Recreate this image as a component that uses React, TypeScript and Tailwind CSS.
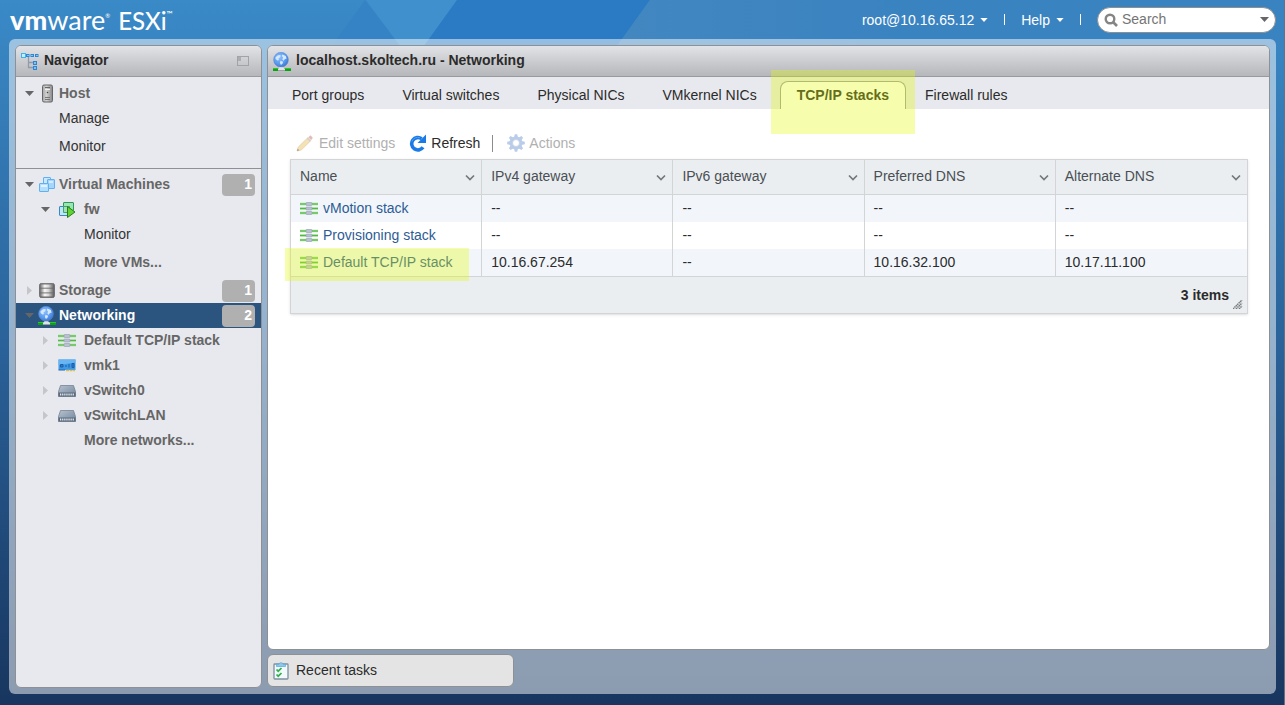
import type { ReactNode } from "react";

function GlobeIcon() {
  return (
    <svg width="18" height="19" viewBox="0 0 18 19" aria-hidden="true">
      <defs>
        <radialGradient id="globe" cx="0.4" cy="0.35" r="0.7">
          <stop offset="0" stopColor="#8fc0fa" />
          <stop offset="0.6" stopColor="#5a9bf0" />
          <stop offset="1" stopColor="#3a72cc" />
        </radialGradient>
      </defs>
      <circle cx="8" cy="7.700" r="7.400" fill="url(#globe)" stroke="#5a8ad0" strokeWidth="0.500" />
      <path
        d="M2.500 5.200 5 3.200l2.600-.3L7.400 5 5.400 6.400 6 8 4.600 8.600 2.600 7zM9.400 2.600l3.400 1.500.8 2.600-1.800.4-1 1.600-1.400-1 .5-2.400-1.200-1.200zM7.500 8.800l2.600 1-.5 1.800-1.600 1.400L6.900 11z"
        fill="#d6e8ff"
      />
      <rect y="16" width="18" height="3" fill="#0fa016" />
      <rect y="16" width="18" height="1" fill="#2cc431" />
      <path d="M5 17 6.500 15.200h3.500L12 17v2H5z" fill="#dfe2e5" />
      <path d="M5 18h7v1H5z" fill="#9a9fa4" />
    </svg>
  );
}

function TreeIcon() {
  return (
    <svg width="18" height="17" viewBox="0 0 18 17" aria-hidden="true">
      <path d="M7.500 4v10.500H13M7.500 9.500H13" fill="none" stroke="#8f9bab" strokeWidth="1.300" />
      <rect x="0.500" y="0.500" width="4" height="4" fill="#c5ecff" stroke="#3fb3ec" />
      <g fill="#7fc0f2" stroke="#2b86d6">
        <rect x="5.500" y="1.500" width="2.500" height="2" />
        <rect x="10" y="1.500" width="2.500" height="2" />
        <rect x="14.500" y="1.500" width="2.500" height="2" />
        <rect x="12.500" y="8.500" width="3" height="3" />
        <rect x="12.500" y="13.500" width="3" height="3" />
      </g>
    </svg>
  );
}

function HostIcon() {
  return (
    <svg width="18" height="19" viewBox="0 0 18 19" aria-hidden="true">
      <defs>
        <linearGradient id="host" x1="0" x2="1">
          <stop offset="0" stopColor="#a5a5a5" />
          <stop offset="0.4" stopColor="#d2d2d2" />
          <stop offset="1" stopColor="#888" />
        </linearGradient>
      </defs>
      <rect x="4.500" y="1" width="10" height="17" rx="1.500" fill="url(#host)" stroke="#666" />
      <path d="M7 3.500h5" stroke="#666" />
      <path d="M7 5.500h5" stroke="#f0f0f0" />
      <path d="M7 13.500h5M7 15.500h5" stroke="#777" />
      <circle cx="9.500" cy="8.500" r="0.800" fill="#444" />
    </svg>
  );
}

function VmsIcon() {
  return (
    <svg width="18" height="17" viewBox="0 0 18 17" aria-hidden="true">
      <g stroke="#62b0ee">
        <rect x="5.500" y="1.500" width="7" height="8" rx="0.500" fill="#c9e7fe" />
        <rect x="9.500" y="3.500" width="7" height="9" rx="0.500" fill="#a6d5fc" />
        <rect x="1.500" y="7.500" width="9" height="8" rx="0.500" fill="#b4defd" />
      </g>
      <path d="M3 9h6v2H3z" fill="#e0f3ff" />
      <path d="M11 5h4v2h-4z" fill="#d3ecff" />
    </svg>
  );
}

function VmOnIcon() {
  return (
    <svg width="18" height="17" viewBox="0 0 18 17" aria-hidden="true">
      <rect x="5.500" y="1.500" width="10" height="8" rx="0.500" fill="#9be6b0" stroke="#2f9460" />
      <rect x="1.500" y="5.500" width="9" height="9" rx="0.500" fill="#bfe6f4" stroke="#3a87c8" />
      <path d="M5.500 5.500h6v6h-6z" fill="#9fe3b4" stroke="#3fa373" />
      <path d="M9.500 5.500v11l7.500-5.500z" fill="#62d332" stroke="#277d1a" strokeLinejoin="round" />
    </svg>
  );
}

function StorageIcon() {
  return (
    <svg width="18" height="17" viewBox="0 0 18 17" aria-hidden="true">
      <defs>
        <linearGradient id="disk" x1="0" x2="1">
          <stop offset="0" stopColor="#5f5f5f" />
          <stop offset="0.35" stopColor="#f8f8f8" />
          <stop offset="0.6" stopColor="#d5d5d5" />
          <stop offset="1" stopColor="#555" />
        </linearGradient>
      </defs>
      <rect x="1.500" y="1.500" width="15" height="14" rx="1.800" fill="url(#disk)" stroke="#6a6a6a" strokeWidth="0.800" />
      <path d="M2 2h14" stroke="#777" />
      <path d="M1.500 6.200h15M1.500 10.900h15" stroke="#6a6a6a" strokeWidth="0.900" />
      <path d="M2 15h14" stroke="#666" />
    </svg>
  );
}

function StackIcon() {
  return (
    <svg width="18" height="13" viewBox="0 0 18 13" aria-hidden="true">
      <path d="M0 2h18M0 6.500h18M0 11h18" stroke="#9fd996" strokeWidth="2.400" />
      <path d="M0 2h18M0 6.500h18M0 11h18" stroke="#4fbb40" strokeWidth="1.200" />
      <g fill="#b7c1cf" stroke="#93a0b1" strokeWidth="0.600">
        <rect x="6" y="0.500" width="6" height="3" rx="0.800" />
        <rect x="6" y="5" width="6" height="3" rx="0.800" />
        <rect x="6" y="9.500" width="6" height="3" rx="0.800" />
      </g>
    </svg>
  );
}

function NicIcon() {
  return (
    <svg width="18" height="13" viewBox="0 0 18 13" aria-hidden="true">
      <rect x="0.500" y="0.500" width="17" height="10.500" fill="#3f98e6" />
      <path d="M.5.5h17v3L.5 6z" fill="#69b5f2" />
      <path d="M2.500 5.500h2.500v2.500H2.500zM7 7h2M11 5v3.500M14 4.500h2v4h-2z" stroke="#1a5fa8" fill="#2e7cc8" />
      <path d="M8 11.500h9" stroke="#d8bf55" strokeWidth="1.500" strokeDasharray="3 .6" />
      <path d="M.5 11h6.500" stroke="#2467ab" />
    </svg>
  );
}

function SwitchIcon() {
  return (
    <svg width="18" height="12" viewBox="0 0 18 12" aria-hidden="true">
      <defs>
        <linearGradient id="sw" x1="0" y1="0" x2="1" y2="1">
          <stop offset="0" stopColor="#b5c2cf" />
          <stop offset="1" stopColor="#74859a" />
        </linearGradient>
      </defs>
      <path d="M2.500 0.500h13l2 6v5H.5v-5z" fill="url(#sw)" stroke="#6a7a8d" strokeWidth="0.700" />
      <path d="M.5 7.500h17v4H.5z" fill="#5b6a7c" />
      <path d="M2 9.500h14" stroke="#dfe7ee" strokeWidth="2" strokeDasharray="1.300 .8" />
    </svg>
  );
}

function PencilIcon() {
  return (
    <svg width="18" height="17" viewBox="0 0 18 17" aria-hidden="true">
      <path d="M1 16 2.300 12 12 2.500l3 3L5.200 15z" fill="#f5e2b4" stroke="#e0cba0" strokeWidth="0.700" />
      <path d="m12.300 2.200 1.400-1.300c.5-.4 1-.4 1.400 0l1.300 1.400c.4.400.4.900 0 1.300L15.200 5z" fill="#e2bcbc" />
      <path d="m11.300 3.200 3 3" stroke="#ccd0d6" strokeWidth="1.300" />
      <path d="M1 16l.7-2.200 1.600 1.500z" fill="#9d968c" />
    </svg>
  );
}

function RefreshIcon() {
  return (
    <svg width="18" height="18" viewBox="0 0 18 18" aria-hidden="true">
      <path d="M14 13.300A6.200 6.200 0 1 1 12.600 4.800" fill="none" stroke="#1b7ae6" strokeWidth="3.600" />
      <path d="M17 0.500v8.500H8.500z" fill="#1b7ae6" />
      <path d="M3 7.500a6 6 0 0 1 8-3.700" fill="none" stroke="#4aa0f5" strokeWidth="1" />
    </svg>
  );
}

const teeth = [0, 45, 90, 135, 180, 225, 270, 315];

function GearIcon() {
  return (
    <svg width="18" height="18" viewBox="0 0 18 18" aria-hidden="true">
      <g fill="#b9cce9">
        {teeth.map((angle) => (
          <path key={angle} d="M7.800 0.200h2.400l.9 3.800H6.900z" transform={`rotate(${angle} 9 9)`} />
        ))}
      </g>
      <circle cx="9" cy="9" r="5" fill="none" stroke="#b9cce9" strokeWidth="3" />
      <circle cx="9" cy="9" r="3.500" fill="#fff" stroke="#a9bbd6" strokeWidth="0.600" />
    </svg>
  );
}

function TasksIcon() {
  return (
    <svg width="16" height="19" viewBox="0 0 16 19" aria-hidden="true">
      <rect x="1" y="3" width="14" height="15" rx="0.800" fill="#f2f9fd" stroke="#7d8fa0" strokeWidth="1.300" />
      <path d="M3.500 5.500V3.300h2.300a2.300 2.300 0 0 1 4.400 0h2.300v2.200z" fill="#8cc8ec" stroke="#5ea5d2" strokeWidth="0.700" />
      <path d="m3.500 8.500 1.700 1.700L8.500 7M3.500 13.500l1.700 1.700L8.500 12" fill="none" stroke="#2fb04a" strokeWidth="1.700" />
    </svg>
  );
}

function Caret({ className }: { className: string }) {
  return (
    <svg width="9" height="5" viewBox="0 0 9 5" className={className} aria-hidden="true">
      <path d="M0 0h9L4.500 5z" fill="currentColor" />
    </svg>
  );
}

function Chevron() {
  return (
    <svg width="10" height="7" viewBox="0 0 10 7" aria-hidden="true">
      <path d="m1 1.500 4 4 4-4" fill="none" stroke="#74787c" strokeWidth="1.700" />
    </svg>
  );
}

function Backdrop() {
  return (
    <svg className="absolute left-0 top-0 h-[46px] w-full" aria-hidden="true">
      <defs>
        <linearGradient id="fade" gradientUnits="userSpaceOnUse" x1="620" y1="0" x2="900" y2="0">
          <stop offset="0" stopColor="#4287c0" />
          <stop offset="1" stopColor="#3a83c1" />
        </linearGradient>
      </defs>
      <path d="M365 0 400 46H332z" fill="#3583c4" />
      <path d="M366 0h91l-33 46h-24z" fill="#4090ce" />
      <path d="M457 0h193l-33 46H424z" fill="#2a7bc4" />
      <path d="M650 0h3000v46H617z" fill="url(#fade)" />
    </svg>
  );
}

type TreeItem = {
  label: string;
  icon?: ReactNode;
  level: 1 | 2;
  arrow?: "open" | "closed";
  badge?: number;
  plain?: boolean;
  active?: boolean;
  spaced?: boolean;
};

const hostItems: TreeItem[] = [
  { label: "Host", icon: <HostIcon />, level: 1, arrow: "open" },
  { label: "Manage", level: 1, plain: true },
  { label: "Monitor", level: 1, plain: true, spaced: true },
];

const inventoryItems: TreeItem[] = [
  { label: "Virtual Machines", icon: <VmsIcon />, level: 1, arrow: "open", badge: 1 },
  { label: "fw", icon: <VmOnIcon />, level: 2, arrow: "open" },
  { label: "Monitor", level: 2, plain: true },
  { label: "More VMs...", level: 2, spaced: true },
  { label: "Storage", icon: <StorageIcon />, level: 1, arrow: "closed", badge: 1, spaced: true },
  { label: "Networking", icon: <GlobeIcon />, level: 1, arrow: "open", badge: 2, active: true },
  { label: "Default TCP/IP stack", icon: <StackIcon />, level: 2, arrow: "closed" },
  { label: "vmk1", icon: <NicIcon />, level: 2, arrow: "closed" },
  { label: "vSwitch0", icon: <SwitchIcon />, level: 2, arrow: "closed" },
  { label: "vSwitchLAN", icon: <SwitchIcon />, level: 2, arrow: "closed" },
  { label: "More networks...", level: 2 },
];

function TreeRow({ item }: { item: TreeItem }) {
  const top = item.level === 1;
  const tone = item.active
    ? "bg-[#2b547e] font-bold text-white"
    : item.plain
      ? "text-[#333]"
      : "font-bold text-[#666]";
  return (
    <li className={item.spaced ? "pt-[3px]" : ""}>
      <a href="#" className={`flex h-[25px] items-center pr-1.5 ${top ? "pl-2" : "pl-6"} ${tone}`}>
        <span className="flex w-[10px] justify-center">
          {item.arrow === "open" && <Caret className="text-[#666]" />}
          {item.arrow === "closed" && <Caret className="-rotate-90 text-[#c6c6ca]" />}
        </span>
        <span className={`flex w-[18px] justify-center ${top ? "ml-1" : "ml-2"}`}>{item.icon}</span>
        <span className={`pb-0.5 ${top ? "ml-[3px]" : "ml-2"}`}>{item.label}</span>
        {item.badge !== undefined && (
          <span className="ml-auto flex h-[22px] w-[33px] items-center justify-end rounded bg-[#b0b0b0] pb-0.5 pr-[3px] text-white">
            {item.badge}
          </span>
        )}
      </a>
    </li>
  );
}

function Panel({ className, children }: { className: string; children: ReactNode }) {
  return <div className={`rounded-md border border-[#8f9093] ${className}`}>{children}</div>;
}

const barClass =
  "flex h-[31px] shrink-0 items-center rounded-t-[5px] border-b border-[#999a9d] bg-linear-to-b from-[#e2e3e6] to-[#b6b7ba] font-bold text-[#2b2b2b]";

const tabs = ["Port groups", "Virtual switches", "Physical NICs", "VMkernel NICs", "TCP/IP stacks", "Firewall rules"];

const columns = ["Name", "IPv4 gateway", "IPv6 gateway", "Preferred DNS", "Alternate DNS"];

const stacks = [
  { name: "vMotion stack", values: ["--", "--", "--", "--"], marked: false },
  { name: "Provisioning stack", values: ["--", "--", "--", "--"], marked: false },
  { name: "Default TCP/IP stack", values: ["10.16.67.254", "--", "10.16.32.100", "10.17.11.100"], marked: true },
];

export default function App() {
  return (
    <div className="relative flex min-h-screen flex-col bg-linear-to-b from-[#3a8ac8] via-[#2a6198] to-[#18365f] font-['Liberation_Sans',Arial,sans-serif] text-[14px] leading-[18px] text-[#2b2b2b]">
      <Backdrop />
      <span className="absolute inset-y-0 right-0 w-px bg-[#5f7488]" />

      <header className="relative flex h-[39px] shrink-0 items-center pl-[10px] pr-[9px] text-white">
        <div className="flex items-center font-[Lato,sans-serif]">
          <span className="flex items-center text-[27px] leading-8">
            <span className="font-black">vm</span>
            <span>ware</span>
            <span className="self-start pt-2 text-[6px] leading-[8px]">®</span>
          </span>
          <span className="ml-2 flex items-center pt-0.5 text-[24px] leading-8 font-medium">
            ESXi
            <span className="self-start pt-[5px] text-[8px] leading-[8px]">™</span>
          </span>
        </div>
        <div className="ml-auto flex items-center">
          <button type="button" className="flex items-center gap-[6px]">
            root@10.16.65.12
            <Caret className="h-1 w-2" />
          </button>
          <span className="ml-4 h-[11px] w-px bg-white" />
          <button type="button" className="ml-4 flex items-center gap-[6px]">
            Help
            <Caret className="h-1 w-2" />
          </button>
          <span className="ml-4 h-[11px] w-px bg-white" />
          <div className="ml-4 flex h-[26px] w-[179px] items-center rounded-full border border-[#8f8f8f] bg-white px-[6px]">
            <svg width="14" height="14" viewBox="0 0 14 14" className="shrink-0" aria-hidden="true">
              <circle cx="6" cy="6" r="4.300" fill="none" stroke="#858585" strokeWidth="2.400" />
              <path d="m9 9 4 4" stroke="#858585" strokeWidth="2.600" />
            </svg>
            <input
              type="search"
              aria-label="Search"
              placeholder="Search"
              className="ml-1 w-full min-w-0 bg-transparent pb-0.5 text-[#333] outline-none placeholder:text-[#757575]"
            />
            <button type="button" aria-label="Search options" className="shrink-0">
              <Caret className="text-[#666]" />
            </button>
          </div>
        </div>
      </header>

      <div className="relative mx-[9px] mb-[11px] flex flex-1 gap-[5px] rounded-md bg-white/50 p-[6px]">
        <Panel className="flex w-[247px] shrink-0 flex-col bg-[#e8e9ee]">
          <div className={`${barClass} pl-[5px] pr-3`}>
            <TreeIcon />
            <h2 className="ml-[5px] pb-0.5">Navigator</h2>
            <button type="button" aria-label="Minimize navigator" className="ml-auto">
              <svg width="12" height="10" viewBox="0 0 12 10" className="block" aria-hidden="true">
                <rect x="0.500" y="0.500" width="11" height="9" fill="none" stroke="#a3a3a6" />
                <path d="M1 1h3v4H1z" fill="#adadb0" />
              </svg>
            </button>
          </div>
          <nav aria-label="Inventory">
            <ul className="border-b border-[#8f9093] pb-[9px] pt-1">
              {hostItems.map((item) => (
                <TreeRow key={item.label} item={item} />
              ))}
            </ul>
            <ul className="pt-[3px]">
              {inventoryItems.map((item) => (
                <TreeRow key={item.label} item={item} />
              ))}
            </ul>
          </nav>
        </Panel>

        <div className="flex min-w-0 flex-1 flex-col gap-1 pb-px">
          <Panel className="flex flex-1 flex-col bg-white">
            <div className={`${barClass} gap-[5px] pl-[5px]`}>
              <GlobeIcon />
              <h1 className="pb-0.5">localhost.skoltech.ru - Networking</h1>
            </div>

            <div role="tablist" className="flex h-8 shrink-0 items-end bg-[#e8e9ee] pl-[5px]">
              {tabs.map((tab) =>
                tab === "TCP/IP stacks" ? (
                  <div key={tab} className="relative ml-1">
                    <button
                      type="button"
                      role="tab"
                      aria-selected="true"
                      className="flex h-7 items-center rounded-t-lg border border-b-0 border-[#9b9ca0] bg-white px-4 pb-px font-bold"
                    >
                      {tab}
                    </button>
                    <span className="pointer-events-none absolute -inset-x-[9px] -bottom-[25px] -top-[11px] bg-[rgb(228_253_0/0.32)]" />
                  </div>
                ) : (
                  <button key={tab} type="button" role="tab" aria-selected="false" className="flex h-7 items-center px-[19px]">
                    {tab}
                  </button>
                ),
              )}
            </div>

            <div className="pl-[22px] pr-[21px] pt-[25px]">
              <div className="flex h-[18px] items-center pl-[6px]">
                <button type="button" disabled className="flex items-center gap-[5px] text-[#b0b0b0]">
                  <PencilIcon />
                  Edit settings
                </button>
                <button type="button" className="ml-[14px] flex items-center gap-1">
                  <RefreshIcon />
                  Refresh
                </button>
                <span className="ml-3 h-[17px] w-px bg-[#8c8c8c]" />
                <button type="button" disabled className="ml-[14px] flex items-center gap-1 text-[#b0b0b0]">
                  <GearIcon />
                  Actions
                </button>
              </div>

              <div className="mt-[7px] border border-[#d2d4d6] bg-[#eaeef1] shadow-sm">
                <table className="w-full table-fixed border-separate border-spacing-0">
                  <thead>
                    <tr>
                      {columns.map((column) => (
                        <th
                          key={column}
                          scope="col"
                          className="h-[35px] border-b border-r border-[#d2d4d6] pl-[9px] pr-[6px] text-left font-normal text-[#4a4f54] last:border-r-0"
                        >
                          <button type="button" className="flex w-full items-center justify-between">
                            <span className="pb-0.5">{column}</span>
                            <Chevron />
                          </button>
                        </th>
                      ))}
                    </tr>
                  </thead>
                  <tbody>
                    {stacks.map((stack) => (
                      <tr key={stack.name} className="bg-white odd:bg-[#f2f6fb]">
                        <td className="relative h-[27px] border-r border-[#d2d4d6] pl-[9px]">
                          <a href="#" className="flex items-center gap-[5px] text-[#2d5c95]">
                            <StackIcon />
                            <span className="pb-0.5">{stack.name}</span>
                          </a>
                          {stack.marked && (
                            <span className="pointer-events-none absolute -bottom-[5px] -left-[6px] -top-px right-3 bg-[rgb(228_253_0/0.32)]" />
                          )}
                        </td>
                        {stack.values.map((value, index) => (
                          <td
                            key={columns[index + 1]}
                            className="h-[27px] border-r border-[#d2d4d6] pb-0.5 pl-[9px] last:border-r-0"
                          >
                            {value}
                          </td>
                        ))}
                      </tr>
                    ))}
                  </tbody>
                </table>
                <div className="flex h-[37px] items-center justify-end border-t border-[#d2d4d6] pr-1 font-bold">
                  3 items
                  <svg width="10" height="9" viewBox="0 0 10 9" className="mb-1 ml-1 self-end" aria-hidden="true">
                    <path d="M0 9 9 0M3 9l6-6M6 9l3-3" stroke="#777" strokeWidth="1.500" strokeDasharray="1.500 .5" />
                  </svg>
                </div>
              </div>
            </div>
          </Panel>

          <button
            type="button"
            className="flex h-[33px] w-[247px] shrink-0 items-center gap-[7px] rounded-md border border-[#8f9093] bg-[#e4e4e4] pl-[5px]"
          >
            <TasksIcon />
            <span className="pb-0.5">Recent tasks</span>
          </button>
        </div>
      </div>
    </div>
  );
}
